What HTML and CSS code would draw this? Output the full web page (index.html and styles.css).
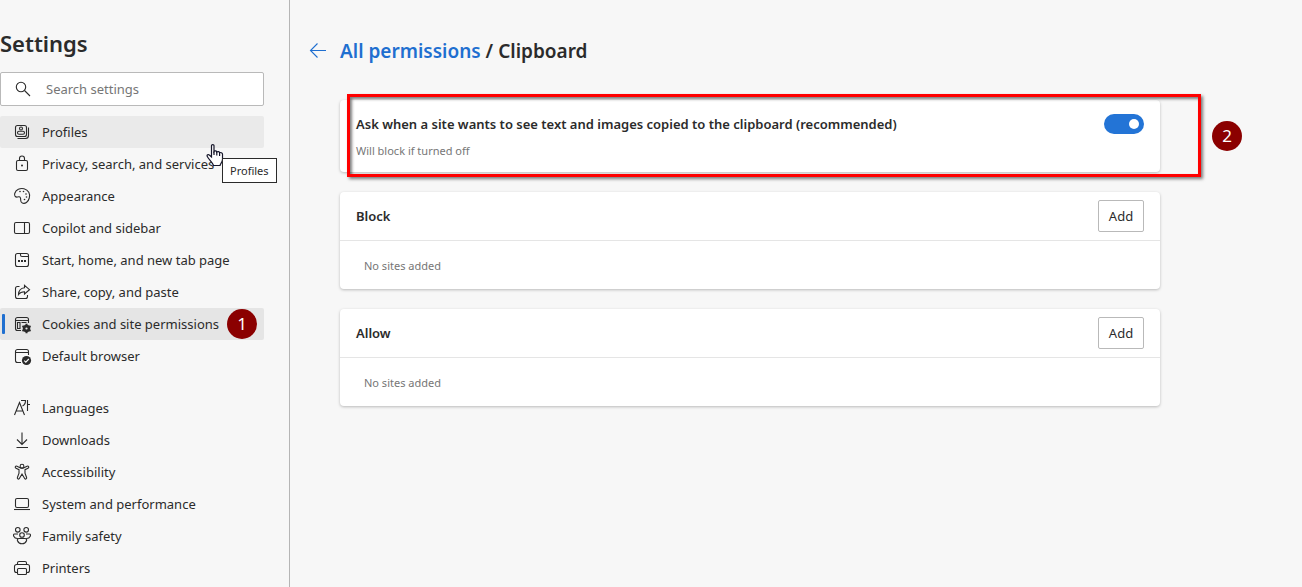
FILE: index.html
```
<!DOCTYPE html>
<html lang="en">
<head>
<meta charset="utf-8">
<title>Settings</title>
<link rel="stylesheet" href="styles.css">
</head>
<body>
<div class="layout">
  <aside class="sidebar">
    <h1 class="title">Settings</h1>
    <label class="search">
      <svg class="icon" viewBox="0 0 20 20" aria-hidden="true"><circle cx="8" cy="8" r="4.700"/><path d="M11.500 11.500 17 17"/></svg>
      <input class="search-input" type="search" placeholder="Search settings" aria-label="Search settings">
    </label>
    <nav class="nav">
      <a class="nav-item hovered" href="#profiles">
        <svg class="icon" viewBox="0 0 20 20" aria-hidden="true"><rect x="3.500" y="3.500" width="11" height="11" rx="2"/><circle cx="9" cy="6.500" r="1.500"/><rect x="5.500" y="9.200" width="7" height="3" rx="1.500"/><path d="M16.500 5.500v8a3 3 0 0 1-3 3h-8"/></svg>
        <span>Profiles</span>
        <svg class="cursor" viewBox="0 0 18 24" aria-hidden="true"><path d="M5.500 2.500c0-1.300 2.500-1.300 2.500 0v6c.6-1 2.700-.8 2.800.5.700-.8 2.600-.6 2.800.7 1-.5 2.900 0 2.900 1.500v5c0 3-2 4-2.500 6.300H7.500C7 20 2.500 16 1.300 13.500c-.8-1.700 1-2.500 2-1.500l2.200 2z"/><path d="M8 8.500v3.500M10.800 9v3.500M13.600 10v3"/></svg>
        <span class="tooltip" role="tooltip">Profiles</span>
      </a>
      <a class="nav-item" href="#privacy">
        <svg class="icon" viewBox="0 0 20 20" aria-hidden="true"><rect x="4.500" y="6.500" width="11" height="10" rx="1.500"/><path d="M7.500 6.500V4.500a2.500 2.500 0 0 1 5 0v2"/><circle class="solid" cx="10" cy="11.500" r="1"/></svg>
        <span>Privacy, search, and services</span>
      </a>
      <a class="nav-item" href="#appearance">
        <svg class="icon" viewBox="0 0 20 20" aria-hidden="true"><path d="M2.700 7.500C4 3.500 8 1.800 12 2.700c4.500 1.100 6.500 5.300 5.300 9.300-1 4-4.300 6.200-7 5-2.300-1-1.300-3-1.800-4.800-.5-1.500-1.700-1.700-3-1.200-1.500.5-3.500-.7-2.800-3.500z"/><g class="solid"><circle cx="8" cy="5.500" r=".8"/><circle cx="11.500" cy="5.500" r=".8"/><circle cx="14" cy="8" r=".8"/><circle cx="14.500" cy="11" r=".8"/><circle cx="12.500" cy="13.500" r=".8"/></g></svg>
        <span>Appearance</span>
      </a>
      <a class="nav-item" href="#sidebar">
        <svg class="icon" viewBox="0 0 20 20" aria-hidden="true"><rect x="2.500" y="4.500" width="15" height="11" rx="1.500"/><path d="M12.500 4.500v11"/></svg>
        <span>Copilot and sidebar</span>
      </a>
      <a class="nav-item" href="#start">
        <svg class="icon" viewBox="0 0 20 20" aria-hidden="true"><rect x="3.500" y="3.500" width="13" height="13" rx="2"/><path d="M8.500 3.500v1.500q0 1.500 1.500 1.500h6.500"/><path class="thick" d="M6 11h2M9 11h2M12 11h2"/></svg>
        <span>Start, home, and new tab page</span>
      </a>
      <a class="nav-item" href="#share">
        <svg class="icon" viewBox="0 0 20 20" aria-hidden="true"><path d="M7.500 4.500h-2a2 2 0 0 0-2 2v8a2 2 0 0 0 2 2h8a2 2 0 0 0 2-2v-1.500"/><path d="M12.500 3.300 17.500 7.700l-5 4.300V9.700c-3 0-4.700.8-6 2.800.2-3.800 2.500-6.300 6-6.700z"/></svg>
        <span>Share, copy, and paste</span>
      </a>
      <a class="nav-item active" href="#cookies" aria-current="page">
        <svg class="icon" viewBox="0 0 20 20" aria-hidden="true"><path d="M9 16.500H5.500a2 2 0 0 1-2-2v-9a2 2 0 0 1 2-2h9a2 2 0 0 1 2 2V9M3.500 6.500h13M9.500 8.500h5"/><path d="M5.500 8.500h2.500v6H5.500z"/><circle class="solid" cx="14.500" cy="14.500" r="3.700"/><path class="thick" d="M14.500 9.800v9.400M10.400 12.100l8.200 4.800M18.600 12.100l-8.200 4.800"/><circle class="gear-hole" cx="14.500" cy="14.500" r="1.100"/></svg>
        <span>Cookies and site permissions</span>
        <span class="marker">1</span>
      </a>
      <a class="nav-item" href="#default-browser">
        <svg class="icon" viewBox="0 0 20 20" aria-hidden="true"><path d="M9 16.500H5.500a2 2 0 0 1-2-2v-9a2 2 0 0 1 2-2h9a2 2 0 0 1 2 2V9M3.500 6.500h13"/><circle class="solid" cx="14.500" cy="14.500" r="4.600"/><path class="check" d="m12.300 14.700 1.500 1.500 3-3.200"/></svg>
        <span>Default browser</span>
      </a>
      <a class="nav-item group-start" href="#languages">
        <svg class="icon" viewBox="0 0 20 20" aria-hidden="true"><path d="M2.500 17 7.500 4.500 12.500 17M4.200 13h6.600M9 2.500h4.500c0 3-1 4.500-3 5.500M15.500 2v11M15.500 6.500h2.500"/></svg>
        <span>Languages</span>
      </a>
      <a class="nav-item" href="#downloads">
        <svg class="icon" viewBox="0 0 20 20" aria-hidden="true"><path d="M10 2.500v12M5 9.500l5 5 5-5M4.500 17.500h11.500"/></svg>
        <span>Downloads</span>
      </a>
      <a class="nav-item" href="#accessibility">
        <svg class="icon" viewBox="0 0 20 20" aria-hidden="true"><circle cx="10" cy="4.200" r="1.900"/><path d="M8 5.700 5 4.200c-1.500-.7-2.500 1.300-1 2l3 1.500v3.500l-1.600 4.300c-.5 1.500 1.500 2.200 2.100.8L10 12l2.500 4.300c.6 1.400 2.600.7 2.100-.8L13 11.200V7.700l3-1.500c1.500-.7.500-2.700-1-2L12 5.700q-2 1-4 0z"/></svg>
        <span>Accessibility</span>
      </a>
      <a class="nav-item" href="#system">
        <svg class="icon" viewBox="0 0 20 20" aria-hidden="true"><rect x="3.500" y="4.500" width="13" height="9" rx="1.500"/><path d="M2 15.500h16"/></svg>
        <span>System and performance</span>
      </a>
      <a class="nav-item" href="#family">
        <svg class="icon" viewBox="0 0 20 20" aria-hidden="true"><circle cx="5.800" cy="3.800" r="2.300"/><circle cx="14.200" cy="3.800" r="2.300"/><circle cx="10" cy="9" r="2.300"/><path d="M6 8H2.500c-2 0-1 4.500 3 4.500M14 8h3.500c2 0 1 4.500-3 4.500M7 12.500h6c1.500 0 2 1 1.500 2.300-1.500 4-7.500 4-9 0C5 13.500 5.500 12.500 7 12.500z"/></svg>
        <span>Family safety</span>
      </a>
      <a class="nav-item" href="#printers">
        <svg class="icon" viewBox="0 0 20 20" aria-hidden="true"><path d="M5.500 14.500h-1a2 2 0 0 1-2-2v-4a2 2 0 0 1 2-2h11a2 2 0 0 1 2 2v4a2 2 0 0 1-2 2h-1M5.500 6.500V5q0-1.500 1.500-1.500h6q1.500 0 1.500 1.500v1.500"/><rect x="5.500" y="10.500" width="9" height="6" rx="1"/></svg>
        <span>Printers</span>
      </a>
    </nav>
  </aside>
  <main class="content">
    <header class="breadcrumb">
      <a class="back" href="#permissions" aria-label="Back"><svg class="icon" viewBox="0 0 20 20" aria-hidden="true"><path d="M18 9.500H2.500M9.500 2.500l-7 7 7 7"/></svg></a>
      <h2 class="heading"><a class="link" href="#permissions">All permissions</a> / Clipboard</h2>
    </header>
    <div class="cards">
      <section class="card ask">
        <div class="ask-text">
          <label class="label" for="ask">Ask when a site wants to see text and images copied to the clipboard (recommended)</label>
          <p class="hint">Will block if turned off</p>
        </div>
        <input class="toggle" id="ask" type="checkbox" role="switch" checked>
        <div class="highlight"><span class="marker">2</span></div>
      </section>
      <section class="card">
        <div class="card-head"><h3 class="label">Block</h3><button class="add" type="button">Add</button></div>
        <p class="empty">No sites added</p>
      </section>
      <section class="card">
        <div class="card-head"><h3 class="label">Allow</h3><button class="add" type="button">Add</button></div>
        <p class="empty">No sites added</p>
      </section>
    </div>
  </main>
</div>
</body>
</html>
```
FILE: styles.css
```
* { box-sizing: border-box; }

body {
  margin: 0;
  background: #f7f7f7;
  color: #2b2b2b;
  font: 13px/20px "Segoe UI", "Noto Sans", "Open Sans", sans-serif;
}

h1, h2, h3, p { margin: 0; }
a { color: inherit; text-decoration: none; }

.layout { display: flex; height: 100vh; overflow: hidden; }

.sidebar {
  flex: none;
  width: 290px;
  padding: 27px 25px 0 0;
  border-right: 1px solid #b5b5b5;
}

.title { font-size: 22px; line-height: 32px; font-weight: 600; }

.search {
  display: flex;
  align-items: center;
  gap: 13px;
  height: 34px;
  margin: 13px 0 10px;
  padding: 0 12px;
  background: #fff;
  border: 1px solid #b9b9b9;
  border-radius: 2px;
}

.search-input {
  flex: 1;
  min-width: 0;
  padding: 0;
  border: 0;
  outline: 0;
  background: none;
  font: inherit;
}
.search-input::placeholder { color: #767676; opacity: 1; }

.icon {
  flex: none;
  width: 20px;
  height: 20px;
  fill: none;
  stroke: #2b2b2b;
  stroke-width: 1.1;
}
.solid { fill: #2b2b2b; stroke: none; }
.thick { stroke-width: 2; }
.gear-hole { fill: #e5e5e5; stroke: none; }
.check { stroke: #fff; }

.nav-item {
  position: relative;
  display: flex;
  align-items: center;
  gap: 10px;
  height: 32px;
  padding-left: 12px;
  border-radius: 2px;
  white-space: nowrap;
}
.hovered { z-index: 1; background: #eaeaea; }
.active { background: #e5e5e5; }
.active::before {
  content: "";
  position: absolute;
  left: 2px;
  top: 6px;
  width: 3px;
  height: 20px;
  border-radius: 1px;
  background: #1f6fd0;
}
.group-start { margin-top: 20px; }

.cursor {
  position: absolute;
  left: 206px;
  top: 27px;
  width: 18px;
  height: 24px;
  fill: #fff;
  stroke: #16162a;
  stroke-width: 1.2;
}

.tooltip {
  position: absolute;
  left: 222px;
  top: 42px;
  padding: 2px 7px 1px;
  background: #fff;
  border: 1px solid #2b2b2b;
  font-size: 11px;
}

.marker {
  position: absolute;
  width: 30px;
  height: 30px;
  border-radius: 50%;
  background: #8b0000;
  color: #fff;
  font-size: 17px;
  line-height: 30px;
  text-align: center;
}
.nav-item .marker { left: 227px; top: 1px; }
.highlight .marker { left: calc(100% + 14px); top: 24px; }

.content { flex: 1; min-width: 0; padding: 35px 50px 0 18px; }

.breadcrumb { display: flex; align-items: center; gap: 12px; height: 32px; }
.back { display: flex; }
.back .icon { stroke: #1f6fd0; }
.heading { font-size: 19px; line-height: 32px; font-weight: 600; }
.link { color: #1f6fd0; }

.cards {
  display: flex;
  flex-direction: column;
  gap: 20px;
  max-width: 852px;
  padding: 33px 0 0 32px;
}

.card {
  background: #fff;
  border-radius: 4px;
  box-shadow: 0 1px 3px rgba(0, 0, 0, .25);
}

.ask {
  position: relative;
  display: flex;
  justify-content: space-between;
  align-items: flex-start;
  padding: 14px 16px 11px;
}
.label { font-size: 13px; line-height: 20px; font-weight: 600; }
.hint { margin-top: 7px; font-size: 11px; color: #767676; }

.toggle {
  appearance: none;
  display: flex;
  justify-content: flex-end;
  align-items: center;
  width: 40px;
  height: 20px;
  margin: 0;
  padding: 0 5px;
  border-radius: 10px;
  background: #2374d6;
}
.toggle::before {
  content: "";
  width: 10px;
  height: 10px;
  border-radius: 50%;
  background: #fff;
}
.toggle:not(:checked) { justify-content: flex-start; background: #767676; }

.highlight {
  position: absolute;
  left: 7px;
  right: -41px;
  top: -6px;
  bottom: -5px;
  border: 3px solid #f00;
  box-shadow: 2px 2px 3px rgba(0, 0, 0, .5), inset 2px 2px 3px rgba(0, 0, 0, .5);
  pointer-events: none;
}

.card-head {
  display: flex;
  justify-content: space-between;
  align-items: center;
  height: 49px;
  padding: 0 16px;
  border-bottom: 1px solid #e5e5e5;
}

.add {
  height: 32px;
  width: 46px;
  padding: 0;
  background: #fff;
  border: 1px solid #b9b9b9;
  border-radius: 2px;
  color: inherit;
  font: inherit;
}

.empty { padding: 15px 24px 13px; font-size: 11px; color: #767676; }
```
